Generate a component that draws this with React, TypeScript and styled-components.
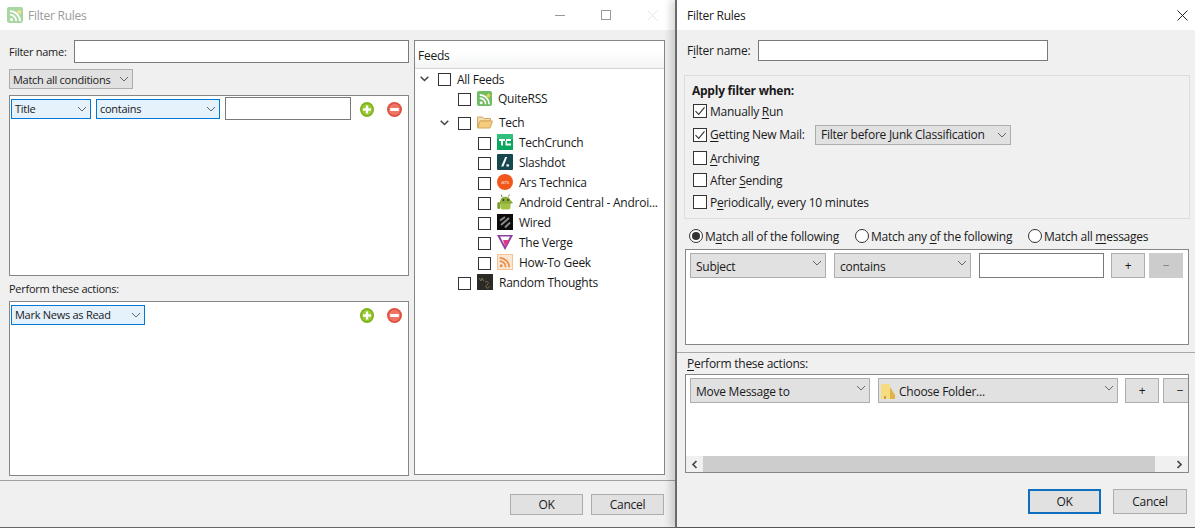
import React from 'react';
import styled, { createGlobalStyle } from 'styled-components';

const GlobalStyle = createGlobalStyle`
  html, body {
    margin: 0;
    padding: 0;
    width: 1195px;
    height: 528px;
    overflow: hidden;
    background: #fff;
  }
  * { box-sizing: border-box; }
  body {
    font-family: "Open Sans", "Noto Sans", sans-serif;
    font-size: 12px;
    letter-spacing: -0.25px;
    color: #1a1a1a;
    white-space: nowrap;
  }
  u { text-underline-offset: 2px; }
`;

const Page = styled.div`
  display: flex;
  width: 1195px;
  height: 528px;
`;

const LeftWindow = styled.div`
  display: flex;
  flex-direction: column;
  width: 675px;
  height: 528px;
  border-bottom: 1px solid #666;
`;

const RightWindow = styled.div`
  position: relative;
  display: flex;
  flex-direction: column;
  width: 520px;
  height: 528px;
  border-left: 2px solid #6a6a6a;
  border-bottom: 1px solid #555;
  box-shadow: -5px 0 7px rgba(0, 0, 0, 0.14);
`;

const TitleBar = styled.div<{ $inactive?: boolean }>`
  display: flex;
  align-items: center;
  flex: none;
  height: 30px;
  background: #fff;
  padding-left: ${(p) => (p.$inactive ? 7 : 10)}px;
  color: ${(p) => (p.$inactive ? '#9a9a9a' : '#1a1a1a')};
`;

const TitleIcon = styled.span`
  display: flex;
  margin-right: 5px;
  opacity: 0.6;
`;

const TitleControls = styled.div`
  display: flex;
  align-items: center;
  margin-left: auto;
`;

const ControlSlot = styled.span<{ $w: number }>`
  display: flex;
  justify-content: center;
  width: ${(p) => p.$w}px;
`;

const LeftBody = styled.div`
  display: flex;
  flex-direction: column;
  flex: 1;
  background: #f0f0f0;
`;

const LeftMain = styled.div`
  display: flex;
  gap: 5px;
  height: 451px;
  padding: 10px 10px 5px 9px;
  border-bottom: 1px solid #a2a2a2;
`;

const LeftForm = styled.div`
  display: flex;
  flex-direction: column;
  width: 400px;
  font-size: 11px;
  letter-spacing: -0.27px;
`;

const NameRow = styled.div`
  display: flex;
  align-items: center;
  justify-content: space-between;
  height: 23px;
`;

const TextInput = styled.div<{ $w: number; $h: number }>`
  flex: none;
  width: ${(p) => p.$w}px;
  height: ${(p) => p.$h}px;
  background: #fff;
  border: 1px solid #7a7a7a;
`;

const Combo = styled.div<{ $w: number; $h?: number; $selected?: boolean }>`
  display: flex;
  align-items: center;
  flex: none;
  width: ${(p) => p.$w}px;
  height: ${(p) => p.$h ?? 20}px;
  padding: ${(p) => (p.$h ? '1px' : '0')} 3px 0 ${(p) => (p.$selected ? 3 : 5)}px;
  background: ${(p) => (p.$selected ? '#e5f1fb' : '#e1e1e1')};
  border: 1px solid ${(p) => (p.$selected ? '#0078d7' : '#adadad')};

  & > svg:last-child {
    margin-left: auto;
    margin-bottom: ${(p) => (p.$h ? 6 : 0)}px;
  }
`;

const MatchCombo = styled(Combo)`
  margin-top: 6px;
  padding-left: 3px;
`;

const RuleBox = styled.div<{ $h: number }>`
  display: flex;
  flex-direction: column;
  flex: none;
  height: ${(p) => p.$h}px;
  background: #fff;
  border: 1px solid #868686;
`;

const ConditionBox = styled(RuleBox)`
  margin-top: 6px;
`;

const SectionLabel = styled.div`
  display: flex;
  align-items: center;
  flex: none;
  height: 25px;
`;

const LeftRuleRow = styled.div`
  display: flex;
  align-items: center;
  height: 23px;
  margin-top: 1px;
  padding: 0 6px 0 1px;
  gap: 5px;
`;

const RoundIcons = styled.div`
  display: flex;
  gap: 13px;
  margin-left: auto;
  padding-top: 1px;
`;

const FeedsPane = styled.div`
  display: flex;
  flex-direction: column;
  width: 251px;
  background: #fff;
  border: 1px solid #868686;
`;

const FeedsHeader = styled.div`
  display: flex;
  align-items: center;
  flex: none;
  height: 28px;
  padding: 2px 0 0 3px;
  background: linear-gradient(#fff 40%, #f3f4f5);
  border-bottom: 1px solid #d4d4d4;
`;

const TreeRow = styled.div<{ $level: number; $spaced?: boolean }>`
  display: flex;
  align-items: center;
  flex: none;
  height: 20px;
  margin-top: ${(p) => (p.$spaced ? 4 : 0)}px;
  padding-left: ${(p) => p.$level * 20 + 1}px;
`;

const Toggle = styled.span`
  display: flex;
  flex: none;
  align-items: center;
  width: 22px;
  padding-left: 4px;
`;

const TreeBox = styled.span`
  flex: none;
  width: 13px;
  height: 13px;
  background: #fff;
  border: 1px solid #333;
`;

const TreeIcon = styled.span`
  display: flex;
  flex: none;
  margin: 0 0 2px 6px;
`;

const TreeText = styled.span<{ $plain?: boolean }>`
  margin-left: 6px;
  padding-bottom: ${(p) => (p.$plain ? 0 : 1)}px;
`;

const Footer = styled.div<{ $gap: number; $pad: number; $top: number }>`
  display: flex;
  justify-content: flex-end;
  gap: ${(p) => p.$gap}px;
  padding: ${(p) => p.$top}px ${(p) => p.$pad}px 0 0;
`;

const Button = styled.div<{ $w: number; $h: number; $def?: boolean; $off?: boolean }>`
  display: flex;
  align-items: center;
  justify-content: center;
  flex: none;
  width: ${(p) => p.$w}px;
  height: ${(p) => p.$h}px;
  background: ${(p) => (p.$off ? '#cccccc' : '#e1e1e1')};
  border: ${(p) => (p.$def ? '2px solid #0f6fbe' : `1px solid ${p.$off ? '#cccccc' : '#adadad'}`)};
  color: ${(p) => (p.$off ? '#7a7a7a' : '#1a1a1a')};
`;

const RightBody = styled.div`
  display: flex;
  flex-direction: column;
  flex: 1;
  background: #f0f0f0;
  padding-top: 10px;
`;

const RightName = styled.div`
  display: flex;
  align-items: center;
  flex: none;
  height: 21px;
  padding-left: 10px;
  gap: 10px;
`;

const NameLabel = styled.span`
  width: 61px;
`;

const ApplyGroup = styled.div`
  display: flex;
  flex-direction: column;
  flex: none;
  width: 506px;
  height: 144px;
  margin: 14px 0 0 7px;
  padding: 5px 0 0 8px;
  border: 1px solid #dcdcdc;
`;

const GroupTitle = styled.div`
  display: flex;
  align-items: center;
  height: 19px;
  margin-left: -1px;
  font-weight: 700;
`;

const CheckRow = styled.div<{ $tall?: boolean }>`
  display: flex;
  align-items: center;
  height: ${(p) => (p.$tall ? 25 : 22)}px;
`;

const Check = styled.span`
  display: flex;
  align-items: center;
  justify-content: center;
  flex: none;
  width: 14px;
  height: 14px;
  margin-right: 3px;
  background: #fff;
  border: 1px solid #333;
`;

const MailLabel = styled.span`
  width: 105px;
`;

const RadioRow = styled.div`
  display: flex;
  align-items: center;
  flex: none;
  height: 30px;
  padding: 4px 0 0 12px;
`;

const RadioItem = styled.div<{ $w: number }>`
  display: flex;
  align-items: center;
  width: ${(p) => p.$w}px;
`;

const RadioDot = styled.span<{ $on?: boolean }>`
  display: flex;
  align-items: center;
  justify-content: center;
  flex: none;
  width: 14px;
  height: 14px;
  margin-right: 2px;
  background: #fff;
  border: 1px solid #333;
  border-radius: 50%;

  &::after {
    content: '';
    display: ${(p) => (p.$on ? 'block' : 'none')};
    width: 8px;
    height: 8px;
    border-radius: 50%;
    background: #333;
  }
`;

const RightBox = styled(RuleBox)`
  width: 504px;
  margin-left: 8px;
  overflow: hidden;
`;

const RightRuleRow = styled.div`
  display: flex;
  flex: none;
  padding: 3px 0 0 4px;
`;

const Spacer = styled.span<{ $w: number }>`
  flex: none;
  width: ${(p) => p.$w}px;
`;

const Divider = styled.div`
  flex: none;
  height: 1px;
  margin-top: 7px;
  background: #a8a8a8;
`;

const RightLabel = styled.div`
  display: flex;
  align-items: center;
  flex: none;
  height: 21px;
  padding-left: 10px;
`;

const FolderGlyph = styled.span`
  display: flex;
  margin: 0 3px 0 -3px;
`;

const ScrollBar = styled.div`
  display: flex;
  flex: none;
  height: 16px;
  margin-top: auto;
  background: #f0f0f0;
`;

const ScrollArrow = styled.span<{ $end?: boolean }>`
  display: flex;
  align-items: center;
  justify-content: center;
  flex: none;
  width: 17px;
  margin-left: ${(p) => (p.$end ? 'auto' : '0')};
`;

const ScrollThumb = styled.span`
  flex: none;
  width: 452px;
  background: #cdcdcd;
`;

const Chevron = () => (
  <svg width="10" height="6" viewBox="0 0 10 6" fill="none">
    <path d="M1 1l4 4 4-4" stroke="#666" strokeWidth="1" />
  </svg>
);

const TreeChevron = () => (
  <svg width="9" height="6" viewBox="0 0 9 6" fill="none">
    <path d="M.7.7l3.8 3.8L8.3.7" stroke="#444" strokeWidth="1.5" />
  </svg>
);

const RoundPlus = () => (
  <svg width="14" height="15" viewBox="0 0 14 15">
    <ellipse cx="7" cy="7.5" rx="7" ry="7.5" fill="#7fb21f" />
    <ellipse cx="7" cy="7.5" rx="5.4" ry="5.8" fill="#98c832" />
    <path d="M5.8 3.4h2.4v2.9H11v2.4H8.2v2.9H5.8V8.7H3V6.3h2.8z" fill="#fff" />
  </svg>
);

const RoundMinus = () => (
  <svg width="15" height="15" viewBox="0 0 15 15">
    <circle cx="7.5" cy="7.5" r="7.5" fill="#dc5140" />
    <circle cx="7.5" cy="7.5" r="5.7" fill="#ef7666" />
    <rect x="3.2" y="6" width="8.6" height="3" rx=".5" fill="#fff" />
  </svg>
);

const RssArcs = ({ stroke }: { stroke: string }) => (
  <>
    <circle cx="4.2" cy="11.8" r="1.5" fill={stroke} />
    <path d="M2.7 7.2a6 6 0 0 1 6 6" stroke={stroke} strokeWidth="1.7" fill="none" />
    <path d="M2.7 3.8a9.5 9.5 0 0 1 9.5 9.5" stroke={stroke} strokeWidth="1.7" fill="none" />
  </>
);

const QuiteRssIcon = ({ size = 15 }: { size?: number }) => (
  <svg width={size} height={size} viewBox="0 0 15 15">
    <rect width="15" height="15" rx="2" fill="#6dbb63" />
    <RssArcs stroke="#fff" />
    <path d="M11.3 1.5l.9 1.9 2 .3-1.5 1.4.4 2-1.8-1-1.8 1 .4-2L8.9 3.7l2-.3z" fill="#e8d25a" />
  </svg>
);

const OpenFolderIcon = () => (
  <svg width="16" height="14" viewBox="0 0 16 14">
    <path d="M.5 2h5l1.5 1.5h6.5V6H3L.5 12.5z" fill="#f3dcae" stroke="#d5a860" />
    <path d="M3 6h12.5l-2.4 7H.6z" fill="#f6cc7c" stroke="#d5a860" />
  </svg>
);

const TechCrunchIcon = () => (
  <svg width="16" height="16" viewBox="0 0 16 16">
    <rect width="16" height="16" fill="#0aa85e" />
    <rect width="16" height="5" fill="#2fc07c" />
    <path d="M2 5h6v2H6v4.5H4V7H2zM9 5h5v2H10v2.5h4v2H8.5V7H9z" fill="#fff" />
  </svg>
);

const SlashdotIcon = () => (
  <svg width="16" height="16" viewBox="0 0 16 16">
    <rect width="16" height="16" rx="1" fill="#17484f" />
    <path d="M8.2 3h2L6.4 12.5h-2.2z" fill="#fff" />
    <rect x="9.5" y="10.3" width="2.4" height="2.2" fill="#fff" />
  </svg>
);

const ArsIcon = () => (
  <svg width="16" height="16" viewBox="0 0 16 16">
    <circle cx="8" cy="8" r="8" fill="#f1571d" />
    <text x="8" y="10" textAnchor="middle" fontSize="6" fontFamily="Open Sans, sans-serif" fill="#fde0d0">
      ars
    </text>
  </svg>
);

const AndroidIcon = () => (
  <svg width="16" height="16" viewBox="0 0 16 16">
    <path d="M3 8a5.5 5.5 0 0 1 10.5-2L16 9l-3 1H3z" fill="#8bab3a" />
    <path d="M5 3L4.2.6M11.5 2.6l1-2" stroke="#6d8a2a" />
    <circle cx="6.4" cy="6" r=".9" fill="#2d3a10" />
    <circle cx="11" cy="6" r=".9" fill="#2d3a10" />
    <path d="M3.5 9.5h10V13a2.5 2.5 0 0 1-2.5 2.5H6A2.5 2.5 0 0 1 3.5 13z" fill="#a4c146" />
    <rect x="0.3" y="8" width="3" height="7" rx="1.5" fill="#7d9a33" />
  </svg>
);

const WiredIcon = () => (
  <svg width="16" height="16" viewBox="0 0 16 16">
    <rect width="16" height="16" fill="#0c0c0c" />
    <path d="M3 6.5l5-3.5M4 11l8-7M8 13.5l5-5" stroke="#8a8a8a" strokeWidth="2" />
  </svg>
);

const VergeIcon = () => (
  <svg width="16" height="16" viewBox="0 0 16 16">
    <path d="M0 1h16L8 16z" fill="#8a3f9e" />
    <path d="M3 2.5h10L8 12z" fill="#fff" />
    <path d="M6 6h6.2L8.4 13.5z" fill="#e0388c" />
  </svg>
);

const HowToGeekIcon = () => (
  <svg width="16" height="16" viewBox="0 0 16 16">
    <rect x=".5" y=".5" width="15" height="15" fill="#fbe6d3" stroke="#f1c49a" />
    <RssArcs stroke="#e8904a" />
  </svg>
);

const RandomIcon = () => (
  <svg width="16" height="16" viewBox="0 0 16 16">
    <rect width="16" height="16" fill="#2b2a26" />
    <path d="M2 4l2 3 1-3 2 3M8 8c2-1 4 0 3 2s-3 1-2 3 3 1 4-1" stroke="#8d7f58" strokeWidth=".8" fill="none" />
  </svg>
);

const ClosedFolderIcon = () => (
  <svg width="15" height="16" viewBox="0 0 15 16">
    <path d="M0 1h8l1 1v14H0z" fill="#f5dc80" />
    <path d="M9 4l5 8v4H9z" fill="#dfb34a" />
    <path d="M3 16v-3h2v3z" fill="#c9a040" />
  </svg>
);

const CheckMark = () => (
  <svg width="12" height="12" viewBox="0 0 12 12" fill="none">
    <path d="M1.5 6.2l3.2 3.2 5.8-7" stroke="#333" strokeWidth="1.1" />
  </svg>
);

const feedRows: { name: string; level: number; icon?: React.ReactNode; open?: boolean; spaced?: boolean }[] = [
  { name: 'All Feeds', level: 0, open: true },
  { name: 'QuiteRSS', level: 1, icon: <QuiteRssIcon /> },
  { name: 'Tech', level: 1, icon: <OpenFolderIcon />, open: true, spaced: true },
  { name: 'TechCrunch', level: 2, icon: <TechCrunchIcon /> },
  { name: 'Slashdot', level: 2, icon: <SlashdotIcon /> },
  { name: 'Ars Technica', level: 2, icon: <ArsIcon /> },
  { name: 'Android Central - Androi...', level: 2, icon: <AndroidIcon /> },
  { name: 'Wired', level: 2, icon: <WiredIcon /> },
  { name: 'The Verge', level: 2, icon: <VergeIcon /> },
  { name: 'How-To Geek', level: 2, icon: <HowToGeekIcon /> },
  { name: 'Random Thoughts', level: 1, icon: <RandomIcon /> },
];

const App = () => {
  return (
    <Page>
      <GlobalStyle />
      <LeftWindow>
        <TitleBar $inactive>
          <TitleIcon>
            <QuiteRssIcon size={16} />
          </TitleIcon>
          Filter Rules
          <TitleControls>
            <ControlSlot $w={46}>
              <svg width="10" height="10" viewBox="0 0 10 10">
                <path d="M0 5.5h10" stroke="#999" />
              </svg>
            </ControlSlot>
            <ControlSlot $w={46}>
              <svg width="10" height="10" viewBox="0 0 10 10" fill="none">
                <rect x=".5" y=".5" width="9" height="9" stroke="#999" />
              </svg>
            </ControlSlot>
            <ControlSlot $w={46}>
              <svg width="11" height="11" viewBox="0 0 11 11">
                <path d="M.5.5l10 10M10.5.5l-10 10" stroke="#e4e4e4" />
              </svg>
            </ControlSlot>
          </TitleControls>
        </TitleBar>
        <LeftBody>
          <LeftMain>
            <LeftForm>
              <NameRow>
                Filter name:
                <TextInput $w={335} $h={23} />
              </NameRow>
              <MatchCombo $w={124}>
                Match all conditions
                <Chevron />
              </MatchCombo>
              <ConditionBox $h={181}>
                <LeftRuleRow>
                  <Combo $w={80} $selected>
                    Title
                    <Chevron />
                  </Combo>
                  <Combo $w={124} $selected>
                    contains
                    <Chevron />
                  </Combo>
                  <TextInput $w={126} $h={23} />
                  <RoundIcons>
                    <RoundPlus />
                    <RoundMinus />
                  </RoundIcons>
                </LeftRuleRow>
              </ConditionBox>
              <SectionLabel>Perform these actions:</SectionLabel>
              <RuleBox $h={175}>
                <LeftRuleRow>
                  <Combo $w={134} $selected>
                    Mark News as Read
                    <Chevron />
                  </Combo>
                  <RoundIcons>
                    <RoundPlus />
                    <RoundMinus />
                  </RoundIcons>
                </LeftRuleRow>
              </RuleBox>
            </LeftForm>
            <FeedsPane>
              <FeedsHeader>Feeds</FeedsHeader>
              {feedRows.map((row) => (
                <TreeRow key={row.name} $level={row.level} $spaced={row.spaced}>
                  <Toggle>{row.open && <TreeChevron />}</Toggle>
                  <TreeBox />
                  {row.icon && <TreeIcon>{row.icon}</TreeIcon>}
                  <TreeText $plain={!row.icon}>{row.name}</TreeText>
                </TreeRow>
              ))}
            </FeedsPane>
          </LeftMain>
          <Footer $gap={8} $pad={11} $top={13}>
            <Button $w={73} $h={21}>
              OK
            </Button>
            <Button $w={73} $h={21}>
              Cancel
            </Button>
          </Footer>
        </LeftBody>
      </LeftWindow>

      <RightWindow>
        <TitleBar>
          Filter Rules
          <TitleControls>
            <ControlSlot $w={26}>
              <svg width="11" height="11" viewBox="0 0 11 11">
                <path d="M.5.5l10 10M10.5.5l-10 10" stroke="#222" />
              </svg>
            </ControlSlot>
          </TitleControls>
        </TitleBar>
        <RightBody>
          <RightName>
            <NameLabel>
              F<u>i</u>lter name:
            </NameLabel>
            <TextInput $w={290} $h={21} />
          </RightName>
          <ApplyGroup>
            <GroupTitle>Apply filter when:</GroupTitle>
            <CheckRow>
              <Check>
                <CheckMark />
              </Check>
              <span>
                Manually <u>R</u>un
              </span>
            </CheckRow>
            <CheckRow $tall>
              <Check>
                <CheckMark />
              </Check>
              <MailLabel>
                <u>G</u>etting New Mail:
              </MailLabel>
              <Combo $w={196}>
                Filter before Junk Classification
                <Chevron />
              </Combo>
            </CheckRow>
            <CheckRow>
              <Check />
              <span>
                <u>A</u>rchiving
              </span>
            </CheckRow>
            <CheckRow>
              <Check />
              <span>
                After <u>S</u>ending
              </span>
            </CheckRow>
            <CheckRow>
              <Check />
              <span>
                P<u>e</u>riodically, every 10 minutes
              </span>
            </CheckRow>
          </ApplyGroup>
          <RadioRow>
            <RadioItem $w={166}>
              <RadioDot $on />
              <span>
                M<u>a</u>tch all of the following
              </span>
            </RadioItem>
            <RadioItem $w={173}>
              <RadioDot />
              <span>
                Match any <u>o</u>f the following
              </span>
            </RadioItem>
            <RadioItem $w={140}>
              <RadioDot />
              <span>
                Match all <u>m</u>essages
              </span>
            </RadioItem>
          </RadioRow>
          <RightBox $h={96}>
            <RightRuleRow>
              <Combo $w={136} $h={25}>
                Subject
                <Chevron />
              </Combo>
              <Spacer $w={8} />
              <Combo $w={137} $h={25}>
                contains
                <Chevron />
              </Combo>
              <Spacer $w={8} />
              <TextInput $w={125} $h={25} />
              <Spacer $w={7} />
              <Button $w={34} $h={25}>
                +
              </Button>
              <Spacer $w={4} />
              <Button $w={34} $h={25} $off>
                −
              </Button>
            </RightRuleRow>
          </RightBox>
          <Divider />
          <RightLabel>
            <span>
              <u>P</u>erform these actions:
            </span>
          </RightLabel>
          <RightBox $h={99}>
            <RightRuleRow>
              <Combo $w={180} $h={25}>
                Move Message to
                <Chevron />
              </Combo>
              <Spacer $w={8} />
              <Combo $w={240} $h={25}>
                <FolderGlyph>
                  <ClosedFolderIcon />
                </FolderGlyph>
                Choose Folder...
                <Chevron />
              </Combo>
              <Spacer $w={7} />
              <Button $w={34} $h={25}>
                +
              </Button>
              <Spacer $w={4} />
              <Button $w={34} $h={25}>
                −
              </Button>
            </RightRuleRow>
            <ScrollBar>
              <ScrollArrow>
                <svg width="7" height="9" viewBox="0 0 7 9" fill="none">
                  <path d="M5.5 1L2 4.5 5.5 8" stroke="#444" strokeWidth="1.7" />
                </svg>
              </ScrollArrow>
              <ScrollThumb />
              <ScrollArrow $end>
                <svg width="7" height="9" viewBox="0 0 7 9" fill="none">
                  <path d="M1.5 1L5 4.5 1.5 8" stroke="#444" strokeWidth="1.7" />
                </svg>
              </ScrollArrow>
            </ScrollBar>
          </RightBox>
          <Footer $gap={12} $pad={8} $top={16}>
            <Button $w={73} $h={25} $def>
              OK
            </Button>
            <Button $w={74} $h={25}>
              Cancel
            </Button>
          </Footer>
        </RightBody>
      </RightWindow>
    </Page>
  );
};

export default App;
